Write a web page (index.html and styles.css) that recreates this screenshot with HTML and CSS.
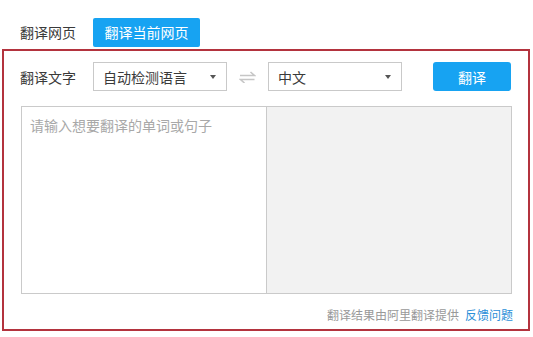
FILE: index.html
```html
<!DOCTYPE html>
<html lang="zh-CN">
<head>
<meta charset="utf-8">
<link rel="stylesheet" href="styles.css">
</head>
<body>
<div class="page">
  <div class="tabs">
    <span class="tab">翻译网页</span>
    <span class="tab tab-active">翻译当前网页</span>
  </div>
  <div class="frame">
    <div class="row">
      <span class="label">翻译文字</span>
      <div class="select"><span>自动检测语言</span><i class="caret"></i></div>
      <div class="swap">
        <svg width="17" height="12" viewBox="0 0 17 12"><path d="M1 4.5H15.5L11.5 1" fill="none" stroke="#c6c6c6" stroke-width="1.6"/><path d="M15.5 8.5H1.5L5.5 12" fill="none" stroke="#c6c6c6" stroke-width="1.6"/></svg>
      </div>
      <div class="select"><span>中文</span><i class="caret"></i></div>
      <button class="btn">翻译</button>
    </div>
    <div class="panels">
      <div class="panel panel-in">请输入想要翻译的单词或句子</div>
      <div class="panel panel-out"></div>
    </div>
    <div class="footer">翻译结果由阿里翻译提供<a class="link">反馈问题</a></div>
  </div>
</div>
</body>
</html>
```
FILE: styles.css
```css
html, body {
  margin: 0;
  background: #fff;
}
body {
  font-family: "Noto Sans CJK SC", "Microsoft YaHei", sans-serif;
  font-size: 14px;
  color: #3a3a3a;
}
.page {
  padding: 18px 0 0 2px;
  width: 528px;
}
.tabs {
  display: flex;
  align-items: center;
  height: 29px;
  padding-left: 18px;
}
.tab {
  font-size: 14px;
  color: #3a3a3a;
  width: 57px;
  margin-right: 16px;
  line-height: 29px;
  white-space: nowrap;
}
.tab-active {
  background: #17a3f2;
  color: #fff;
  width: 107px;
  box-sizing: border-box;
  text-align: center;
  border-radius: 2px;
  height: 29px;
}
.frame {
  margin-top: 2px;
  border: 2px solid #b3333e;
  box-sizing: border-box;
  width: 528px;
  height: 282px;
  padding: 11px 15px 0 16px;
}
.row {
  display: flex;
  align-items: center;
  height: 29px;
}
.label {
  width: 57px;
  margin-right: 16px;
  white-space: nowrap;
}
.select {
  width: 134px;
  height: 29px;
  box-sizing: border-box;
  border: 1px solid #c9c9c9;
  display: flex;
  align-items: center;
  justify-content: space-between;
  padding: 0 10px 0 9px;
}
.caret {
  width: 0;
  height: 0;
  border-left: 3.5px solid transparent;
  border-right: 3.5px solid transparent;
  border-top: 4px solid #555;
}
.swap {
  width: 41px;
  display: flex;
  justify-content: center;
  align-items: center;
  padding-top: 1px;
}
.btn {
  margin-left: 31px;
  width: 78px;
  height: 29px;
  border: none;
  border-radius: 3px;
  background: #17a3f2;
  color: #fff;
  font-family: inherit;
  font-size: 14px;
  padding: 0;
}
.panels {
  display: flex;
  margin: 15px 0 0 1px;
  height: 188px;
}
.panel {
  box-sizing: border-box;
  border: 1px solid #cacaca;
  height: 188px;
}
.panel-in {
  width: 246px;
  padding: 8px 8px;
  color: #a8a8a8;
  line-height: 20px;
}
.panel-out {
  width: 245px;
  border-left: none;
  background: #f2f2f2;
}
.footer {
  margin-top: 11px;
  text-align: right;
  font-size: 12px;
  line-height: 20px;
  color: #999;
}
.link {
  color: #2b8fd8;
  margin-left: 6px;
}
```
